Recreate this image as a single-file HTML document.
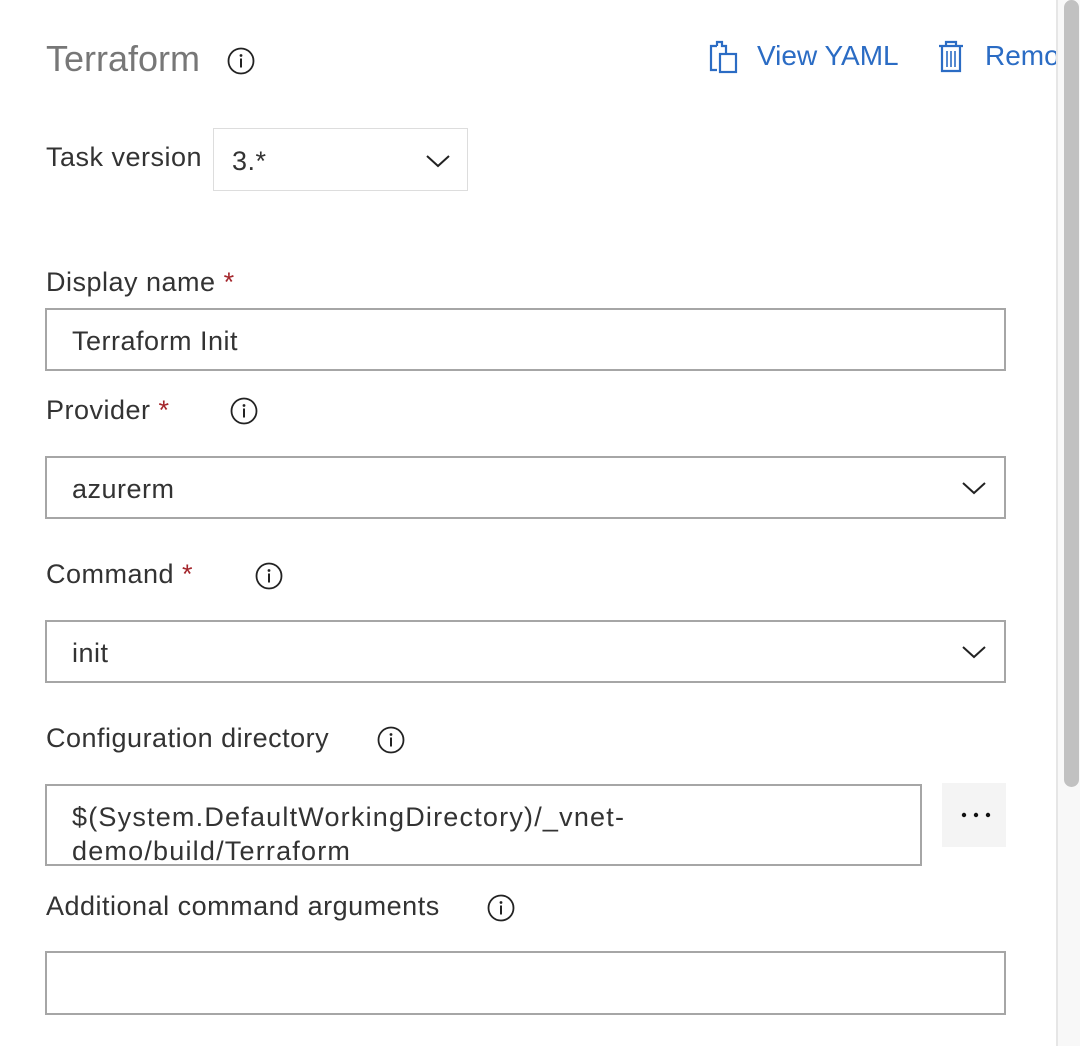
<!DOCTYPE html>
<html><head><meta charset="utf-8"><style>
*{margin:0;padding:0;box-sizing:border-box}
body{width:1080px;height:1046px;background:#fff;position:relative;overflow:hidden;font-family:"Liberation Sans",sans-serif;color:#333}
.a{position:absolute;white-space:nowrap}
.lbl{font-size:27px;line-height:30px;letter-spacing:0.5px}
.star{color:#a4262c}
.box{position:absolute;border:2px solid #a6a6a6;background:#fff}
.val{position:absolute;left:25px;font-size:27px;line-height:30px;color:#333;letter-spacing:0.5px}
.info{position:absolute;width:28px;height:28px}
.chev{position:absolute;width:26px;height:16px}
</style></head><body>

<div class="a" style="left:46px;top:39px;font-size:36px;line-height:40px;color:#777">Terraform</div>
<svg class="info" style="left:227px;top:47px" viewBox="0 0 28 28"><circle cx="14" cy="14" r="12.5" fill="none" stroke="#222" stroke-width="1.8"/><circle cx="14" cy="8.5" r="1.4" fill="#222"/><rect x="13" y="11.5" width="2" height="9" fill="#222"/></svg>

<svg class="a" style="left:708px;top:40px" width="32" height="34" viewBox="0 0 32 34"><path d="M9 6H3V30H9" fill="none" stroke="#2b6cc4" stroke-width="2.2"/><path d="M9 6V2H14V6H18V13" fill="none" stroke="#2b6cc4" stroke-width="2.2"/><rect x="12" y="14" width="16" height="18" fill="none" stroke="#2b6cc4" stroke-width="2.2"/></svg>
<div class="a" style="left:757px;top:40px;font-size:28px;line-height:32px;color:#2b6cc4">View YAML</div>
<svg class="a" style="left:937px;top:40px" width="28" height="34" viewBox="0 0 28 34"><path d="M2 6H26M9 6V2H19V6" fill="none" stroke="#2b6cc4" stroke-width="2.2"/><path d="M5 7V31H23V7" fill="none" stroke="#2b6cc4" stroke-width="2.2"/><path d="M10 11V27M14 11V27M18 11V27" stroke="#2b6cc4" stroke-width="1.6"/></svg>
<div class="a" style="left:985px;top:40px;font-size:28px;line-height:32px;color:#2b6cc4">Remo</div>

<div class="a lbl" style="left:46px;top:142px">Task version</div>
<div class="box" style="left:213px;top:128px;width:255px;height:63px;border:1px solid #ddd"><div class="val" style="left:18px;top:17px">3.*</div>
<svg class="chev" style="left:211px;top:24px" viewBox="0 0 26 16"><path d="M2 3L13 13L24 3" fill="none" stroke="#222" stroke-width="2"/></svg></div>

<div class="a lbl" style="left:46px;top:267px">Display name <span class="star">*</span></div>
<div class="box" style="left:45px;top:308px;width:961px;height:63px"><div class="val" style="top:16px">Terraform Init</div></div>

<div class="a lbl" style="left:46px;top:395px">Provider <span class="star">*</span></div>
<svg class="info" style="left:230px;top:397px" viewBox="0 0 28 28"><circle cx="14" cy="14" r="12.5" fill="none" stroke="#222" stroke-width="1.8"/><circle cx="14" cy="8.5" r="1.4" fill="#222"/><rect x="13" y="11.5" width="2" height="9" fill="#222"/></svg>
<div class="box" style="left:45px;top:456px;width:961px;height:63px"><div class="val" style="top:16px">azurerm</div>
<svg class="chev" style="left:914px;top:22px" viewBox="0 0 26 16"><path d="M2 3L13 13L24 3" fill="none" stroke="#222" stroke-width="2"/></svg></div>

<div class="a lbl" style="left:46px;top:559px">Command <span class="star">*</span></div>
<svg class="info" style="left:255px;top:562px" viewBox="0 0 28 28"><circle cx="14" cy="14" r="12.5" fill="none" stroke="#222" stroke-width="1.8"/><circle cx="14" cy="8.5" r="1.4" fill="#222"/><rect x="13" y="11.5" width="2" height="9" fill="#222"/></svg>
<div class="box" style="left:45px;top:620px;width:961px;height:63px"><div class="val" style="top:16px">init</div>
<svg class="chev" style="left:914px;top:22px" viewBox="0 0 26 16"><path d="M2 3L13 13L24 3" fill="none" stroke="#222" stroke-width="2"/></svg></div>

<div class="a lbl" style="left:46px;top:723px">Configuration directory</div>
<svg class="info" style="left:377px;top:726px" viewBox="0 0 28 28"><circle cx="14" cy="14" r="12.5" fill="none" stroke="#222" stroke-width="1.8"/><circle cx="14" cy="8.5" r="1.4" fill="#222"/><rect x="13" y="11.5" width="2" height="9" fill="#222"/></svg>
<div class="box" style="left:45px;top:784px;width:877px;height:82px"><div class="val" style="top:14px;line-height:34px;white-space:nowrap;letter-spacing:1.2px">$(System.DefaultWorkingDirectory)/_vnet-<br>demo/build/Terraform</div></div>
<div class="a" style="left:942px;top:783px;width:64px;height:64px;background:#f4f4f4"><svg width="64" height="64"><circle cx="22" cy="32" r="2.2" fill="#111"/><circle cx="34" cy="32" r="2.2" fill="#111"/><circle cx="46" cy="32" r="2.2" fill="#111"/></svg></div>

<div class="a lbl" style="left:46px;top:891px">Additional command arguments</div>
<svg class="info" style="left:487px;top:894px" viewBox="0 0 28 28"><circle cx="14" cy="14" r="12.5" fill="none" stroke="#222" stroke-width="1.8"/><circle cx="14" cy="8.5" r="1.4" fill="#222"/><rect x="13" y="11.5" width="2" height="9" fill="#222"/></svg>
<div class="box" style="left:45px;top:951px;width:961px;height:64px"></div>

<div class="a" style="left:1056px;top:0;width:24px;height:1046px;background:#f8f8f8;border-left:2px solid #e6e6e6"></div>
<div class="a" style="left:1064px;top:0;width:15px;height:787px;background:#c1c1c1;border-radius:8px"></div>
</body></html>
